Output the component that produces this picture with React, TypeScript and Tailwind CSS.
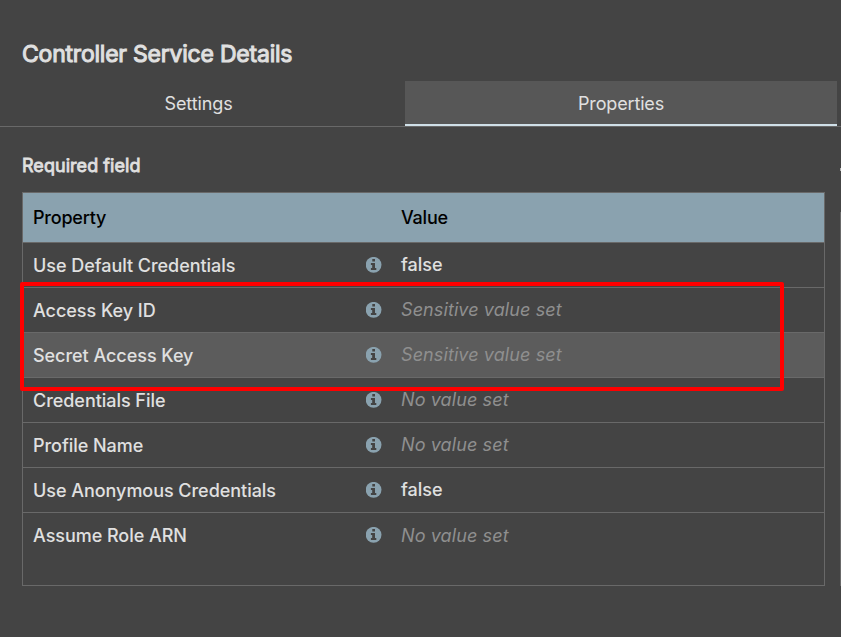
const rows = [
  ['Use Default Credentials', 'false'],
  ['Access Key ID', 'Sensitive value set'],
  ['Secret Access Key', 'Sensitive value set'],
  ['Credentials File', 'No value set'],
  ['Profile Name', 'No value set'],
  ['Use Anonymous Credentials', 'false'],
  ['Assume Role ARN', 'No value set'],
];

function InfoIcon() {
  return (
    <svg className="mr-[19px] h-4 w-4" viewBox="0 0 16 16">
      <circle cx="7.6" cy="7.8" r="7.9" fill="#8aa2af" />
      <path d="M6.3 2.1H9v2.4H6.3zM4.9 6.1H9v5h1.3v2H4.9v-2h1.3v-3H4.9z" fill="#444444" />
    </svg>
  );
}

export default function App() {
  return (
    <div className="relative h-[637px] w-[841px] overflow-hidden bg-[#444444] font-['Inter',sans-serif] text-[18px] text-[#e0e0e0]">
      <h1 className="h-[81px] pl-[22px] pt-[38px] text-[23px] font-normal leading-[32px] tracking-[-0.22px] [-webkit-text-stroke:1px_#e0e0e0]">Controller Service Details</h1>
      <div className="flex h-[46px] border-b border-[#696969]">
        <div className="flex w-[405px] items-center justify-center pr-[8px] tracking-[-0.1px]">Settings</div>
        <div className="flex h-[45px] w-[432px] items-center justify-center border-b-2 border-[#d0e0e8] bg-[#575757] pt-[2px] tracking-[-0.15px]">Properties</div>
      </div>
      <h2 className="h-[65px] pl-[22px] pt-[27px] text-[18px] font-normal leading-[24px] tracking-[0.05px] [-webkit-text-stroke:0.8px_#e0e0e0]">Required field</h2>
      <div className="ml-[22px] h-[394px] w-[803px] border border-[#696969]">
        <div className="flex h-[50px] items-center border-b border-[#696969] bg-[#8aa2af] font-[450] tracking-[-0.2px] text-black">
          <div className="w-[378px] pl-[10px]">Property</div>
          <div>Value</div>
        </div>
        {rows.map(([name, value], i) => (
          <div key={name} className={`flex items-center border-[#696969] font-[450] ${i < 6 ? 'h-[45px] border-b' : 'h-[44px]'} ${i === 2 ? 'bg-[#5c5c5c]' : ''}`}>
            <div className="w-[343px] pl-[10px] pt-px tracking-[-0.04px]">{name}</div>
            <InfoIcon />
            <div className={`${i < 6 ? 'pb-px' : 'pt-px'} ${value === 'false' ? '' : 'italic tracking-[0.1px] text-[#8f8f8f]'}`}>{value}</div>
          </div>
        ))}
      </div>
      <div className="absolute left-[20px] top-[282px] h-[109px] w-[764px] rounded-[2px] border-4 border-[#ff0000]" />
      <div className="absolute left-[840px] top-[212px] h-[374px] w-px bg-[#696969]" />
      <div className="absolute left-[840px] top-[168px] h-[3px] w-px bg-[#b0b0b0]" />
    </div>
  );
}
